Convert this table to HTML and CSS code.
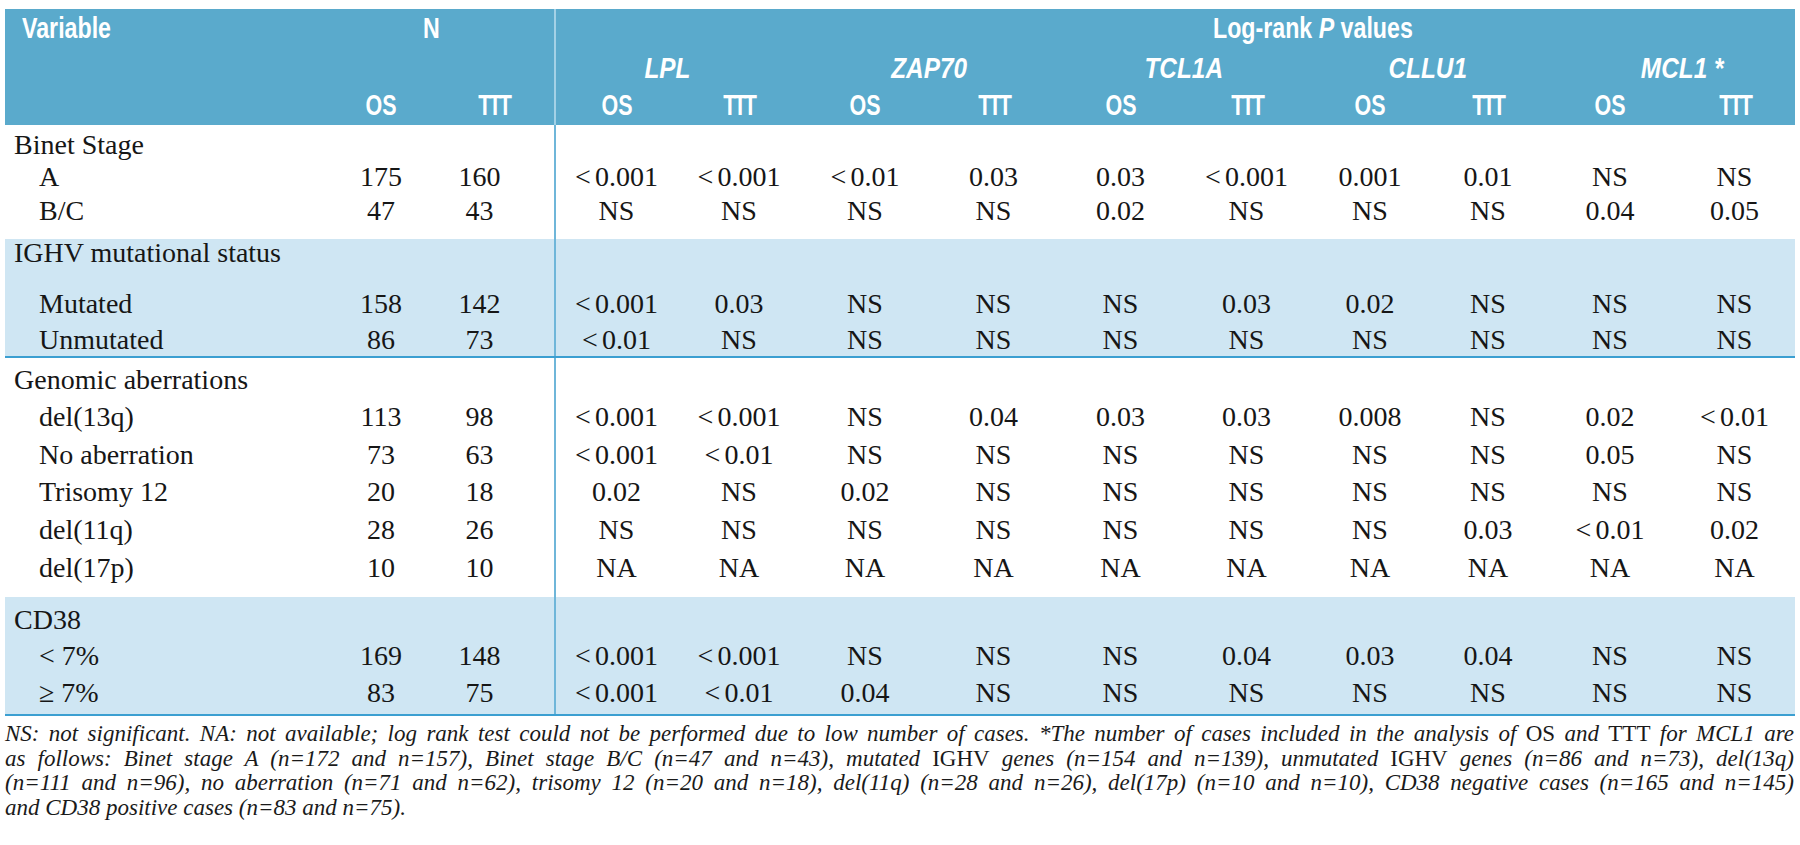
FILE: index.html
```html
<!DOCTYPE html>
<html>
<head>
<meta charset="utf-8">
<link rel="stylesheet" href="styles.css">
</head>
<body>
<div class="page">
<table class="tbl">
<colgroup>
<col class="w-var"><col class="w-os"><col class="w-ttt">
<col class="w-p1"><col class="w-p2"><col class="w-p3"><col class="w-p4"><col class="w-p5">
<col class="w-p6"><col class="w-p7"><col class="w-p8"><col class="w-p9"><col class="w-p10">
</colgroup>
<thead>
<tr class="h1">
<th class="var"><span class="hx l">Variable</span></th>
<th colspan="2" class="n"><span class="hx">N</span></th>
<th colspan="10" class="sep lr"><span class="hx l">Log-rank <i>P</i> values</span></th>
</tr>
<tr class="h2">
<th></th><th colspan="2"></th>
<th colspan="2" class="sep gene g1"><span class="hx gx"><i>LPL</i></span></th>
<th colspan="2" class="gene"><span class="hx gx"><i>ZAP70</i></span></th>
<th colspan="2" class="gene"><span class="hx gx"><i>TCL1A</i></span></th>
<th colspan="2" class="gene"><span class="hx gx"><i>CLLU1</i></span></th>
<th colspan="2" class="gene g5"><span class="hx gx"><i>MCL1 *</i></span></th>
</tr>
<tr class="h3">
<th></th><th><span class="hx ct">OS</span></th><th class="ttt"><span class="hx ct t3">TTT</span></th>
<th class="sep"><span class="hx ct">OS</span></th><th><span class="hx ct t3">TTT</span></th>
<th><span class="hx ct">OS</span></th><th><span class="hx ct t3">TTT</span></th>
<th><span class="hx ct">OS</span></th><th><span class="hx ct t3">TTT</span></th>
<th><span class="hx ct">OS</span></th><th><span class="hx ct t3">TTT</span></th>
<th><span class="hx ct">OS</span></th><th><span class="hx ct t3">TTT</span></th>
</tr>
</thead>
<tbody>
<tr class="s6"><td colspan="3"></td><td colspan="10" class="sep"></td></tr>
<tr class="r32"><td class="title">Binet Stage</td><td></td><td class="ttt"></td><td class="sep"></td><td></td><td></td><td></td><td></td><td></td><td></td><td></td><td></td><td></td></tr>
<tr class="r34"><td class="item">A</td><td>175</td><td class="ttt">160</td><td class="sep">&lt; 0.001</td><td>&lt; 0.001</td><td>&lt; 0.01</td><td>0.03</td><td>0.03</td><td>&lt; 0.001</td><td>0.001</td><td>0.01</td><td>NS</td><td>NS</td></tr>
<tr class="r38"><td class="item">B/C</td><td>47</td><td class="ttt">43</td><td class="sep">NS</td><td>NS</td><td>NS</td><td>NS</td><td>0.02</td><td>NS</td><td>NS</td><td>NS</td><td>0.04</td><td>0.05</td></tr>
<tr class="s4"><td colspan="3"></td><td colspan="10" class="sep"></td></tr>
</tbody>
<tbody class="band">
<tr class="r51"><td class="title">IGHV mutational status</td><td></td><td class="ttt"></td><td class="sep"></td><td></td><td></td><td></td><td></td><td></td><td></td><td></td><td></td><td></td></tr>
<tr class="r36"><td class="item">Mutated</td><td>158</td><td class="ttt">142</td><td class="sep">&lt; 0.001</td><td>0.03</td><td>NS</td><td>NS</td><td>NS</td><td>0.03</td><td>0.02</td><td>NS</td><td>NS</td><td>NS</td></tr>
<tr class="r29"><td class="item">Unmutated</td><td>86</td><td class="ttt">73</td><td class="sep">&lt; 0.01</td><td>NS</td><td>NS</td><td>NS</td><td>NS</td><td>NS</td><td>NS</td><td>NS</td><td>NS</td><td>NS</td></tr>
<tr class="bb"><td colspan="3"></td><td colspan="10" class="sep"></td></tr>
</tbody>
<tbody>
<tr class="s8"><td colspan="3"></td><td colspan="10" class="sep"></td></tr>
<tr class="r37"><td class="title">Genomic aberrations</td><td></td><td class="ttt"></td><td class="sep"></td><td></td><td></td><td></td><td></td><td></td><td></td><td></td><td></td><td></td></tr>
<tr class="r38"><td class="item">del(13q)</td><td>113</td><td class="ttt">98</td><td class="sep">&lt; 0.001</td><td>&lt; 0.001</td><td>NS</td><td>0.04</td><td>0.03</td><td>0.03</td><td>0.008</td><td>NS</td><td>0.02</td><td>&lt; 0.01</td></tr>
<tr class="r37"><td class="item">No aberration</td><td>73</td><td class="ttt">63</td><td class="sep">&lt; 0.001</td><td>&lt; 0.01</td><td>NS</td><td>NS</td><td>NS</td><td>NS</td><td>NS</td><td>NS</td><td>0.05</td><td>NS</td></tr>
<tr class="r38"><td class="item">Trisomy 12</td><td>20</td><td class="ttt">18</td><td class="sep">0.02</td><td>NS</td><td>0.02</td><td>NS</td><td>NS</td><td>NS</td><td>NS</td><td>NS</td><td>NS</td><td>NS</td></tr>
<tr class="r38"><td class="item">del(11q)</td><td>28</td><td class="ttt">26</td><td class="sep">NS</td><td>NS</td><td>NS</td><td>NS</td><td>NS</td><td>NS</td><td>NS</td><td>0.03</td><td>&lt; 0.01</td><td>0.02</td></tr>
<tr class="r37"><td class="item">del(17p)</td><td>10</td><td class="ttt">10</td><td class="sep">NA</td><td>NA</td><td>NA</td><td>NA</td><td>NA</td><td>NA</td><td>NA</td><td>NA</td><td>NA</td><td>NA</td></tr>
<tr class="s6"><td colspan="3"></td><td colspan="10" class="sep"></td></tr>
</tbody>
<tbody class="band">
<tr class="s9"><td colspan="3"></td><td colspan="10" class="sep"></td></tr>
<tr class="r36"><td class="title">CD38</td><td></td><td class="ttt"></td><td class="sep"></td><td></td><td></td><td></td><td></td><td></td><td></td><td></td><td></td><td></td></tr>
<tr class="r37"><td class="item">&lt; 7%</td><td>169</td><td class="ttt">148</td><td class="sep">&lt; 0.001</td><td>&lt; 0.001</td><td>NS</td><td>NS</td><td>NS</td><td>0.04</td><td>0.03</td><td>0.04</td><td>NS</td><td>NS</td></tr>
<tr class="r34"><td class="item">&#8805; 7%</td><td>83</td><td class="ttt">75</td><td class="sep">&lt; 0.001</td><td>&lt; 0.01</td><td>0.04</td><td>NS</td><td>NS</td><td>NS</td><td>NS</td><td>NS</td><td>NS</td><td>NS</td></tr>
<tr class="bb"><td colspan="3"></td><td colspan="10" class="sep"></td></tr>
</tbody>
</table>
<div class="note">
<div class="ln">NS: not significant. NA: not available; log rank test could not be performed due to low number of cases. *The number of cases included in the analysis of <span class="up">OS</span> and <span class="up">TTT</span> for MCL1 are</div>
<div class="ln">as follows: Binet stage A (n=172 and n=157), Binet stage B/C (n=47 and n=43), mutated <span class="up">IGHV</span> genes (n=154 and n=139), unmutated <span class="up">IGHV</span> genes (n=86 and n=73), del(13q)</div>
<div class="ln">(n=111 and n=96), no aberration (n=71 and n=62), trisomy 12 (n=20 and n=18), del(11q) (n=28 and n=26), del(17p) (n=10 and n=10), CD38 negative cases (n=165 and n=145)</div>
<div class="ln last">and CD38 positive cases (n=83 and n=75).</div>
</div>
</div>
</body>
</html>
```

FILE: styles.css
```css
html, body {
  margin: 0;
  padding: 0;
  background: #ffffff;
}

.page {
  padding: 9px 5px 0 5px;
  width: 1790px;
}

.tbl {
  border-collapse: collapse;
  table-layout: fixed;
  width: 1790px;
  font-family: "Liberation Serif", "Times New Roman", serif;
  font-size: 28px;
  color: #161616;
}

.w-var { width: 324px; }
.w-os { width: 104px; }
.w-ttt { width: 122px; }
.w-p1 { width: 122px; }
.w-p2 { width: 124px; }
.w-p3 { width: 128px; }
.w-p4 { width: 129px; }
.w-p5 { width: 125px; }
.w-p6 { width: 127px; }
.w-p7 { width: 120px; }
.w-p8 { width: 116px; }
.w-p9 { width: 128px; }
.w-p10 { width: 121px; }

/* ---------- header ---------- */
.tbl thead th {
  background: #5aaacc;
  color: #ffffff;
  font-family: "Liberation Sans", Arial, sans-serif;
  font-weight: 700;
  font-size: 29px;
  line-height: 1;
  padding: 0;
  text-align: center;
  vertical-align: top;
  white-space: nowrap;
}

.tbl thead .h1 th { height: 33px; padding-top: 5px; }
.tbl thead .h2 th { height: 31px; padding-top: 7px; }
.tbl thead .h3 th { height: 34px; padding-top: 6px; }

.hx {
  display: inline-block;
  transform: scaleX(0.8);
  transform-origin: 50% 50%;
}
.hx.l { transform-origin: 0 50%; }
.hx.gx { transform: scaleX(0.84); }
.hx.ct { transform: scaleX(0.74); }
.hx.t3 { letter-spacing: -4px; }

.tbl thead th.var { text-align: left; padding-left: 17px; }
.tbl thead th.n { padding-right: 20px; }
.tbl thead th.lr { text-align: left; padding-left: 657px; }
.tbl thead th.g1 { padding-right: 22px; }
.tbl thead th.g5 { padding-left: 24px; }

.tbl thead th.sep { border-left: 2px solid #a3d1e6; }

/* ---------- body ---------- */
.tbl td {
  height: 36px;
  padding: 0;
  line-height: 28px;
  text-align: center;
  vertical-align: top;
  white-space: nowrap;
  word-spacing: -3px;
}

.tbl td.title { text-align: left; padding-left: 9px; word-spacing: 0; }
.tbl td.item { text-align: left; padding-left: 34px; word-spacing: 0; }
.tbl td.ttt { padding-right: 28px; }

.tbl td.sep { border-left: 2px solid #6fb6d9; }

.tbl tr.r29 td { height: 29px; }
.tbl tr.r32 td { height: 32px; }
.tbl tr.r34 td { height: 34px; }
.tbl tr.r36 td { height: 36px; }
.tbl tr.r37 td { height: 37px; }
.tbl tr.r38 td { height: 38px; }
.tbl tr.r51 td { height: 51px; }

.tbl tr.s4 td { height: 4px; }
.tbl tr.s6 td { height: 6px; }
.tbl tr.s8 td { height: 8px; }
.tbl tr.s9 td { height: 9px; }
.tbl tr.bb td { height: 1px; border-bottom: 2px solid #3b9fd1; }

.tbl tbody.band td { background: #cfe6f3; }

/* ---------- footnote ---------- */
.note {
  margin-top: 6px;
  font-family: "Liberation Serif", "Times New Roman", serif;
  font-style: italic;
  font-size: 23px;
  line-height: 24.5px;
  color: #1a1a1a;
  width: 1789px;
}

.note .ln {
  text-align: justify;
  text-align-last: justify;
  white-space: nowrap;
}

.note .ln.last { text-align-last: left; }

.note .up { font-style: normal; }
```
